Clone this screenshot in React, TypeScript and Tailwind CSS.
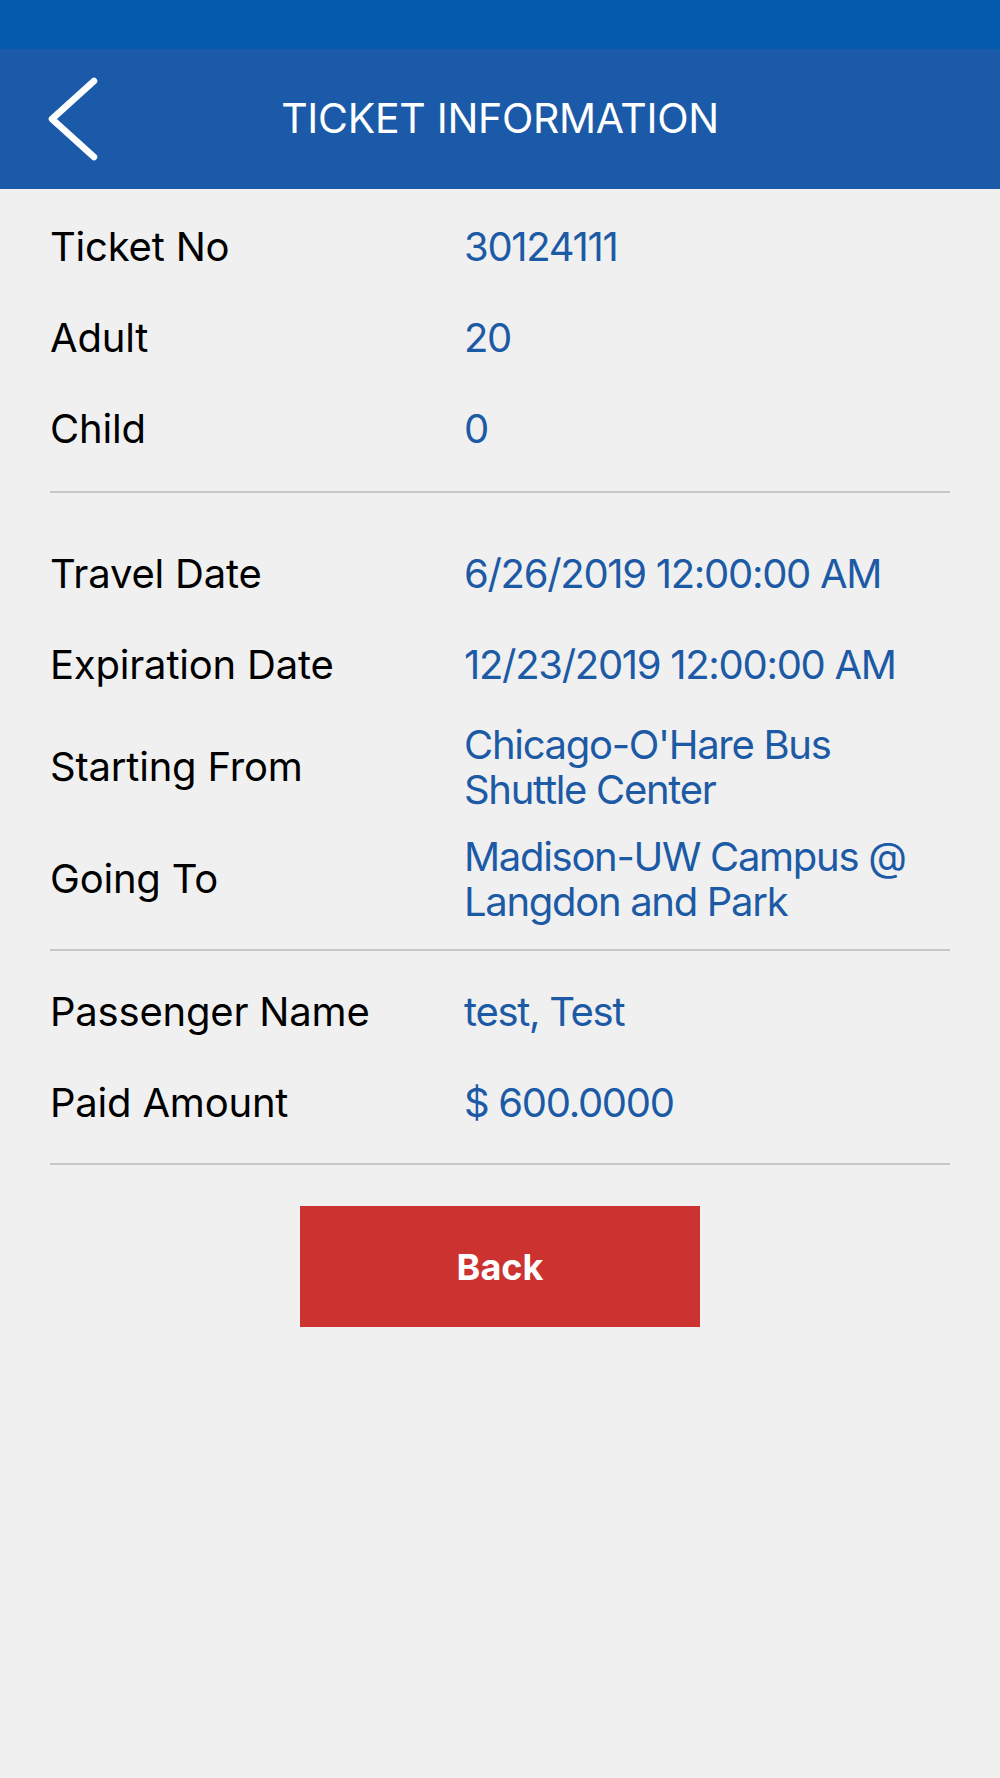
import type { ReactNode } from "react";

const FONT = "font-['Inter','Roboto','Liberation_Sans',sans-serif]";

function Row({ label, children, h = "h-[91px]" }: { label: string; children: ReactNode; h?: string }) {
  return (
    <div className={"grid grid-cols-[414px_1fr] items-center " + h}>
      <span className="tracking-[-0.2px] text-black">{label}</span>
      <span className="leading-[45px] tracking-[-1.3px] text-[#1c5aa6]">{children}</span>
    </div>
  );
}

function Divider() {
  return <div className="h-[2px] bg-[#c6c6c6]" />;
}

// Ticket detail screen (read only).
export default function App() {
  return (
    <div className={"min-h-[1778px] bg-[#f0f0f0] text-[40px] " + FONT}>
      <div className="h-[49px] bg-[#055cad]" />
      <header className="grid h-[140px] grid-cols-[1fr_auto_1fr] items-center bg-[#1b5aa8] text-white">
        <div className="pl-[46px]">
          <svg width="54" height="86" viewBox="0 0 54 86" fill="none">
            <path d="M48 5 L6 43 L48 81" stroke="white" strokeWidth="6.5" strokeLinecap="round" strokeLinejoin="round" />
          </svg>
        </div>
        <h1 className="text-[41px] font-normal tracking-[-0.3px]">TICKET INFORMATION</h1>
        <div />
      </header>

      <main className="px-[50px]">
        <div className="pt-[12px] pb-[17px]">
          <Row label="Ticket No">30124111</Row>
          <Row label="Adult">20</Row>
          <Row label="Child">0</Row>
        </div>
        <Divider />
        <div className="pt-[35px] pb-[15px]">
          <Row label="Travel Date">6/26/2019 12:00:00 AM</Row>
          <Row label="Expiration Date">12/23/2019 12:00:00 AM</Row>
          <Row label="Starting From" h="h-[114px]">
            Chicago-O'Hare Bus Shuttle Center
          </Row>
          <Row label="Going To" h="h-[110px]">
            Madison-UW Campus @ Langdon and Park
          </Row>
        </div>
        <Divider />
        <div className="pt-[15px] pb-[15px]">
          <Row label="Passenger Name">test, Test</Row>
          <Row label="Paid Amount">$ 600.0000</Row>
        </div>
        <Divider />
        <div className="flex justify-center pt-[41px]">
          <button
            type="button"
            className="h-[121px] w-[400px] bg-[#cc3330] text-[36px] font-bold text-white"
          >
            Back
          </button>
        </div>
      </main>
    </div>
  );
}
